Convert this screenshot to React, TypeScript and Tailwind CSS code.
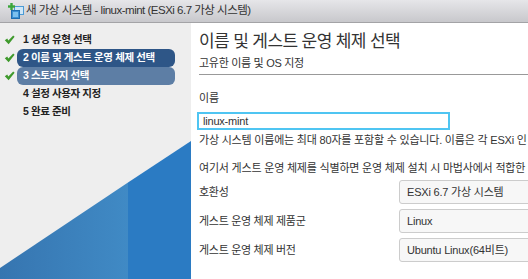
import React from "react";

const FONT = '"Liberation Sans", "Noto Sans CJK KR", sans-serif';

function Check() {
  return (
    <svg width="11" height="10" viewBox="0 0 11 10" className="shrink-0">
      <path d="M0.8 5.2 L3.2 3.6 L4.4 5.6 L9.2 0.6 L10.6 1.8 L4.6 9.2 Z" fill="#3f9a2c" />
    </svg>
  );
}

function VmIcon() {
  return (
    <svg width="16" height="17" viewBox="0 0 16 17">
      <rect x="6.5" y="3.5" width="9" height="8" fill="#cfe6f7" stroke="#4a9bd6" />
      <rect x="3.5" y="7.5" width="8" height="8" fill="#3b8fd4" stroke="#1f6db0" />
      <rect x="5" y="9" width="5" height="5" fill="#7cc0ee" />
      <rect x="0" y="2.3" width="7" height="2.4" fill="#3aa53a" />
      <rect x="2.3" y="0" width="2.4" height="7" fill="#3aa53a" />
    </svg>
  );
}

function Item({ n, text, check, variant }: { n: number; text: string; check?: boolean; variant?: "dark" | "light" }) {
  const pill =
    variant === "dark"
      ? "bg-[#2e5687] text-white"
      : variant === "light"
      ? "bg-[#5d7ea5] text-white"
      : "text-[#222]";
  return (
    <div className="flex h-[18px] items-center">
      <div className="flex w-[17px] justify-end pr-[2px]">{check ? <Check /> : null}</div>
      <div className={`flex h-[18px] w-[158px] items-center rounded-[6px] pl-[6px] text-[10.5px] font-bold tracking-[-0.4px] ${pill}`}>
        {n} {text}
      </div>
    </div>
  );
}

function Row({ label, value }: { label: string; value: string }) {
  return (
    <div className="flex h-[24px] items-center">
      <div className="w-[200px] shrink-0 text-[11px] tracking-[-0.3px] text-[#333]">{label}</div>
      <div className="flex h-[24px] w-[220px] shrink-0 items-center rounded-[3px] border border-[#cccccc] bg-[#f7f7f7] pl-[7px] text-[11px] tracking-[-0.2px] text-[#333]">
        {value}
      </div>
    </div>
  );
}

export default function App() {
  return (
    <div className="h-[279px] w-[528px] overflow-hidden bg-white" style={{ fontFamily: FONT }}>
      <div className="flex h-[23px] items-center border-b border-[#a3a3a6] bg-gradient-to-b from-[#e6e6e9] to-[#c8c8cc] pl-[8px]">
        <VmIcon />
        <span className="ml-[2px] text-[11.5px] tracking-[-0.5px] text-[#333]">
          새 가상 시스템 - linux-mint (ESXi 6.7 가상 시스템)
        </span>
      </div>
      <div className="flex h-[256px]">
        <div className="relative w-[191px] shrink-0 bg-[#eeeeee] pt-[8px]">
          <svg className="absolute bottom-0 left-0" width="191" height="138" viewBox="0 0 191 138">
            <defs>
              <linearGradient id="lg" x1="0" y1="0" x2="1" y2="0">
                <stop offset="0" stopColor="#3675b0" />
                <stop offset="1" stopColor="#408ac5" />
              </linearGradient>
            </defs>
            <polygon points="0,127 128,41.4 128,138 0,138" fill="url(#lg)" />
            <polygon points="128,41.4 191,0 191,138 128,138" fill="#2b7bc3" />
          </svg>
          <div className="relative flex flex-col">
            <Item n={1} text="생성 유형 선택" check />
            <Item n={2} text="이름 및 게스트 운영 체제 선택" check variant="dark" />
            <Item n={3} text="스토리지 선택" check variant="light" />
            <Item n={4} text="설정 사용자 지정" />
            <Item n={5} text="완료 준비" />
          </div>
        </div>
        <div className="flex min-w-0 flex-1 flex-col overflow-hidden pl-[8px] pt-[8px] text-[#333]">
          <div className="h-[22px] whitespace-nowrap text-[17px] leading-[22px] tracking-[-0.6px] text-[#333]">
            이름 및 게스트 운영 체제 선택
          </div>
          <div className="mt-[1px] flex h-[18px] items-center text-[11px] tracking-[-0.3px]">고유한 이름 및 OS 지정</div>
          <div className="mt-[2px] border-t border-[#999999]" />
          <div className="mt-[15px] flex h-[16px] items-center text-[11px]">이름</div>
          <div className="ml-[-2px] mt-[6px] flex h-[18px] w-[253px] items-center border-2 border-[#4fc5f2] pl-[4px] text-[11px] tracking-[-0.2px] text-[#333]">
            linux-mint
          </div>
          <div className="mt-[2px] flex h-[16px] items-center overflow-hidden whitespace-nowrap text-[11px] tracking-[-0.2px]">
            가상 시스템 이름에는 최대 80자를 포함할 수 있습니다. 이름은 각 ESXi 인
          </div>
          <div className="mt-[12px] flex h-[16px] items-center overflow-hidden whitespace-nowrap text-[11px] tracking-[-0.2px]">
            여기서 게스트 운영 체제를 식별하면 운영 체제 설치 시 마법사에서 적합한
          </div>
          <div className="mt-[4px] flex flex-col gap-[5px]">
            <Row label="호환성" value="ESXi 6.7 가상 시스템" />
            <Row label="게스트 운영 체제 제품군" value="Linux" />
            <Row label="게스트 운영 체제 버전" value="Ubuntu Linux(64비트)" />
          </div>
        </div>
      </div>
    </div>
  );
}
